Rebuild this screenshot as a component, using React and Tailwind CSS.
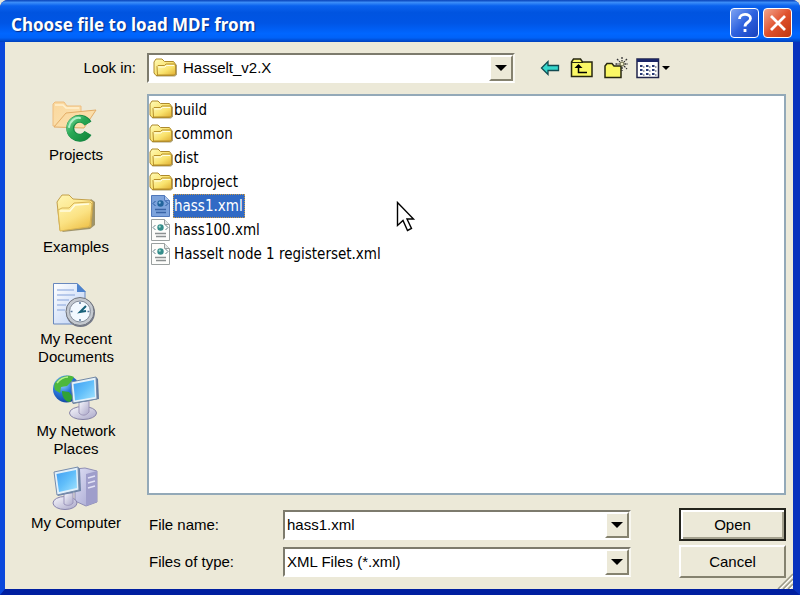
import { useState } from "react";

const UI_FONT = "font-['Liberation_Sans',Arial,sans-serif] text-[15px] leading-[18px] text-black";

const SUNKEN =
  "relative h-[30px] border-2 border-t-[#7d7b6d] border-l-[#7d7b6d] border-r-[#f8f7f0] border-b-white bg-white";

const RAISED =
  "border-2 border-t-white border-l-white border-r-[#85826f] border-b-[#85826f] bg-[#ece9d8]";

const FILES = [
  { name: "build", folder: true },
  { name: "common", folder: true },
  { name: "dist", folder: true },
  { name: "nbproject", folder: true },
  { name: "hass1.xml" },
  { name: "hass100.xml" },
  { name: "Hasselt node 1 registerset.xml" },
];

const PLACES = [
  { label: "Projects", Icon: ProjectsIcon },
  { label: "Examples", Icon: ExamplesIcon },
  { label: "My Recent Documents", Icon: RecentIcon },
  { label: "My Network Places", Icon: NetworkIcon },
  { label: "My Computer", Icon: ComputerIcon },
];

// shared gradients for every icon on the page
function IconDefs() {
  return (
    <svg className="absolute h-0 w-0" aria-hidden>
      <defs>
        <linearGradient id="folder" x1="0" y1="0" x2="1" y2="1">
          <stop offset="0" stopColor="#fffbb8" />
          <stop offset="0.55" stopColor="#f9e26c" />
          <stop offset="1" stopColor="#dfae32" />
        </linearGradient>
        <linearGradient id="bigFolder" x1="0" y1="0" x2="0.6" y2="1">
          <stop offset="0" stopColor="#fff6b4" />
          <stop offset="0.6" stopColor="#fbe283" />
          <stop offset="1" stopColor="#f0c550" />
        </linearGradient>
        <linearGradient id="peach" x1="0" y1="0" x2="1" y2="1">
          <stop offset="0" stopColor="#fbd79c" />
          <stop offset="1" stopColor="#fae3b4" />
        </linearGradient>
        <linearGradient id="greenC" x1="0" y1="0" x2="1" y2="1">
          <stop offset="0" stopColor="#6fd391" />
          <stop offset="0.4" stopColor="#2aa956" />
          <stop offset="1" stopColor="#138a3e" />
        </linearGradient>
        <linearGradient id="screen" x1="0" y1="0" x2="1" y2="1">
          <stop offset="0" stopColor="#3f9df2" />
          <stop offset="0.5" stopColor="#62bffa" />
          <stop offset="1" stopColor="#a4e4ff" />
        </linearGradient>
        <linearGradient id="metal" x1="0" y1="0" x2="1" y2="1">
          <stop offset="0" stopColor="#f8f8fd" />
          <stop offset="1" stopColor="#a9a6c8" />
        </linearGradient>
        <linearGradient id="tower" x1="0" y1="0" x2="1" y2="1">
          <stop offset="0" stopColor="#dfe0f5" />
          <stop offset="1" stopColor="#a3a3cf" />
        </linearGradient>
        <linearGradient id="paper" x1="0" y1="0" x2="1" y2="1">
          <stop offset="0" stopColor="#ffffff" />
          <stop offset="1" stopColor="#b9cff5" />
        </linearGradient>
        <radialGradient id="globe" cx="0.35" cy="0.3" r="0.8">
          <stop offset="0" stopColor="#9bdcff" />
          <stop offset="0.45" stopColor="#2a78dc" />
          <stop offset="1" stopColor="#0d3a96" />
        </radialGradient>
      </defs>
    </svg>
  );
}

function FolderIcon() {
  return (
    <svg className="h-6 w-6 shrink-0" viewBox="0 0 24 24" aria-hidden>
      <path d="M3 20.500h19l2-2V9l-2-1.500z" fill="#8d7a3c" opacity="0.7" />
      <path d="M1 17V6l2-3h6l2.500 2.500h9L22 7.500V18l-2 1.500H3z" fill="url(#folder)" stroke="#ae8a2c" />
      <path d="M4.500 19 4 10.500 5 9.500h6.500L13 8h8.500l1 1v9l-1 1z" fill="url(#folder)" stroke="#b8902c" />
      <path d="M5.500 11h6.500l1.500-1.500h7.500" fill="none" stroke="#fffde0" />
    </svg>
  );
}

function XmlIcon({ selected }) {
  return (
    <svg className="h-6 w-6 shrink-0" viewBox="0 0 24 24" aria-hidden>
      <path
        d="M2.500 1.500h13l5 5v16h-18z"
        fill={selected ? "#7da3dc" : "#fdfdfb"}
        stroke={selected ? "#5078bb" : "#9aa0a0"}
      />
      <path d="M15.500 1.500v5h5" fill={selected ? "#a9c3ec" : "#e4e8e8"} stroke={selected ? "#5078bb" : "#9aa0a0"} />
      <circle cx="11.500" cy="9.500" r="3.200" fill={selected ? "#22649c" : "#358d8b"} />
      <circle cx="10.700" cy="8.700" r="1.100" fill={selected ? "#8dc0e4" : "#a6dcd0"} />
      <path d="m6.500 7-2.500 2.500L6.500 12M16.500 7 19 9.500 16.500 12" fill="none" stroke={selected ? "#28599f" : "#65808a"} />
      <path d="M6 15.500h11M7 18.500h10" stroke={selected ? "#3963a5" : "#8c9191"} strokeWidth="1.400" />
    </svg>
  );
}

function ProjectsIcon() {
  return (
    <svg className="h-12 w-12" viewBox="0 0 48 48" aria-hidden>
      <path d="M1 28V6l2-2h9l3 4h14v8L8 28z" fill="url(#peach)" stroke="#eebd7e" />
      <path d="M2 29 14 15l30-3-12 18z" fill="url(#peach)" stroke="#e3ac66" />
      <path d="M3 7h8l3 3h13" fill="none" stroke="#fff1cf" strokeWidth="1.500" />
      <path d="M36 25.500A9.500 9.500 0 1 0 36 35" fill="none" stroke="#168844" strokeWidth="8" />
      <path d="M35.500 25.500A9.500 9.500 0 1 0 35.500 35" fill="none" stroke="url(#greenC)" strokeWidth="6.500" />
      <path d="M17 29c1-6 6-10 11-9" fill="none" stroke="#b4f0c8" strokeWidth="2" strokeLinecap="round" />
    </svg>
  );
}

function ExamplesIcon() {
  return (
    <svg className="h-12 w-12" viewBox="0 0 48 48" aria-hidden>
      <path d="m10 42 28-3 5-4V12l-4-3z" fill="#857744" opacity="0.75" />
      <path d="M8 40 5 12l2-3 3-4h7l4 4 17 1 3 2-2 25z" fill="url(#bigFolder)" stroke="#c3a04a" />
      <path d="M8 41 6 20l4-2h7l5-5 16-1 2 2-2 21-2 2z" fill="url(#bigFolder)" stroke="#d8b454" />
      <path d="M8 21h10l5-6 14-1" fill="none" stroke="#fffce0" strokeWidth="1.500" />
    </svg>
  );
}

function RecentIcon() {
  return (
    <svg className="h-12 w-12" viewBox="0 0 48 48" aria-hidden>
      <path d="M1.500 1.500H25l8 8V42H1.500z" fill="url(#paper)" stroke="#6888be" />
      <path d="M25 1v9h9z" fill="#4d83ce" />
      <path d="M5 8h17M5 13h18M5 18h12M5 23h9M5 28h8" stroke="#a5bce5" strokeWidth="1.500" />
      <circle cx="28.500" cy="30.500" r="14.500" fill="#737888" />
      <circle cx="28" cy="29.500" r="14" fill="#c4c9d0" stroke="#70747d" />
      <circle cx="28" cy="29.500" r="10.500" fill="#f2f9ff" stroke="#858d9a" />
      <path d="M28 20v2M28 37v2M18.500 29.500h2M35.500 29.500h2" stroke="#55759a" strokeWidth="1.500" />
      <path d="m34 24-6 6 6-1" fill="none" stroke="#17617a" strokeWidth="2" />
    </svg>
  );
}

function NetworkIcon() {
  return (
    <svg className="h-12 w-12" viewBox="0 0 48 48" aria-hidden>
      <circle cx="14.500" cy="15" r="13.500" fill="url(#globe)" />
      <path d="M3 9c5-7 14-9 19-6l-3 5-4 4-6 1-1 6-5-3c-1-3-1-5 0-7z" fill="#4db83c" />
      <path d="m10 17 7 1 4 5-3 5c-5 0-8-5-8-11z" fill="#31a135" />
      <path d="M5 9c3-4 7-6 11-6" fill="none" stroke="#b7f090" strokeWidth="1.500" />
      <ellipse cx="31" cy="39" rx="13.500" ry="6.500" fill="url(#metal)" stroke="#8582a5" />
      <path d="M27 27h10v11c-3 4-7 4-10 1z" fill="url(#metal)" stroke="#9d96b8" />
      <path d="m44 3 2 2 1 20-26 5-1-2z" fill="#62799c" />
      <path d="m19 8 25-5 1 22-24 4z" fill="#e4f1fa" stroke="#7389a6" />
      <path d="m21.500 10 20.500-4 1 17-20 3.500z" fill="url(#screen)" />
    </svg>
  );
}

function ComputerIcon() {
  return (
    <svg className="h-12 w-12" viewBox="0 0 48 48" aria-hidden>
      <path d="m23 3 10-1 12 3v31l-11 4-11-5z" fill="url(#tower)" stroke="#8f8eb5" />
      <path d="m34 8 11-3v31l-11 4z" fill="#9f9ecb" />
      <path d="m36 12 7-2m-7 7 7-2m-7 7 7-2" stroke="#e2e2f6" strokeWidth="1.500" />
      <ellipse cx="13" cy="37" rx="12" ry="6.500" fill="url(#metal)" stroke="#8884ad" />
      <path d="M12 27h9v10c-3 3-6 3-9 1z" fill="url(#metal)" stroke="#9c96bc" />
      <path d="m26 1 2 2 1 22-23 5-1-2z" fill="#6d83a6" />
      <path d="m2 6 24-5 1 23-22 5z" fill="#e2f0fa" stroke="#768cac" />
      <path d="m4.500 8 19.500-4 1 18-18 4z" fill="url(#screen)" />
    </svg>
  );
}

function DropArrow() {
  return (
    <svg width="12" height="6" viewBox="0 0 12 6" aria-hidden>
      <path d="M0 0h12L6 6z" fill="#000" />
    </svg>
  );
}

const DROP_BOX = `absolute top-0 right-0 flex h-[26px] w-6 items-center justify-center ${RAISED}`;

function TitleBar() {
  return (
    <header className="flex h-[42px] items-center justify-between rounded-t-lg bg-[linear-gradient(180deg,#0842b8_0%,#3a8cf8_6%,#0a62ee_14%,#0054e0_30%,#0055e5_55%,#0066ff_80%,#0062f8_90%,#0040bc_100%)] pr-2 pl-[11px]">
      <h1 className="pt-2 font-['Noto_Sans','Open_Sans',sans-serif] text-[17px] leading-6 font-bold text-white [text-shadow:1px_1px_1px_#0a2a80]">
        Choose file to load MDF from
      </h1>
      <div className="flex gap-1 pt-1">
        <button
          type="button"
          aria-label="Help"
          className="flex h-[30px] w-[29px] items-center justify-center rounded-[4px] border border-white bg-linear-to-br from-[#7fa2f1] via-[#2d61df] to-[#1842bd]"
        >
          <svg className="h-5 w-5" viewBox="0 0 20 20" fill="none" stroke="#fff" strokeWidth="2.800" aria-hidden>
            <path d="M4.500 6c0-6 11-6 11-.5 0 4-5.500 3.500-5.500 8M10 16v3" />
          </svg>
        </button>
        <button
          type="button"
          aria-label="Close"
          className="flex h-[30px] w-[29px] items-center justify-center rounded-[4px] border border-white bg-linear-to-br from-[#f0a48c] via-[#e0512c] to-[#bf3710]"
        >
          <svg className="h-5 w-5" viewBox="0 0 20 20" stroke="#fff" strokeWidth="2.800" aria-hidden>
            <path d="m3 3 14 14M17 3 3 17" />
          </svg>
        </button>
      </div>
    </header>
  );
}

function Toolbar() {
  return (
    <div className="ml-[25px] flex items-center gap-2.5">
      <button type="button" aria-label="Back">
        <svg className="h-6 w-5" viewBox="0 0 20 24" aria-hidden>
          <path d="M1.500 12 8 5.500v4h10.500v5H8v4z" fill="#35d6cb" stroke="#124a50" strokeWidth="1.300" />
        </svg>
      </button>
      <button type="button" aria-label="Up one level">
        <svg className="h-6 w-6" viewBox="0 0 24 24" aria-hidden>
          <path d="M1.500 20.500V6l2-3h7l2 3h9.500v14.500z" fill="#fbf865" stroke="#262610" strokeWidth="1.500" />
          <path d="M2 6.500h11" stroke="#262610" />
          <path d="M8.500 9v7.500H17" fill="none" stroke="#000" strokeWidth="1.500" />
          <path d="m4.500 12 4-4 4 4z" fill="#000" />
        </svg>
      </button>
      <button type="button" aria-label="Create new folder">
        <svg className="h-6 w-6" viewBox="0 0 24 24" aria-hidden>
          <path d="M1 21.500V10l2-2.500h5l2 2.500h7v11.500z" fill="#fbf865" stroke="#262610" strokeWidth="1.500" />
          <path d="M18 1v4M18 11v4M11.500 8h4M20.500 8h4M13 3l3 3M20 10l3 3M23 3l-3 3" stroke="#333" strokeDasharray="2 1" strokeWidth="1.300" />
          <circle cx="18" cy="8" r="2" fill="#f4f1cd" stroke="#595938" />
        </svg>
      </button>
      <button type="button" aria-label="View menu" className="-ml-0.5 flex items-center gap-0.5">
        <svg className="h-6 w-6" viewBox="0 0 24 24" aria-hidden>
          <path d="M1 3h21.500v18.500H1z" fill="#fff" stroke="#20254b" strokeWidth="1.500" />
          <path d="M1 3h21.500v3H1z" fill="#1b2667" />
          <path d="M4 10h2.500M10 10h2.500M16 10h2.500M4 14h2.500M10 14h2.500M16 14h2.500M4 18h2.500M10 18h2.500M16 18h2.500" stroke="#263773" strokeWidth="2.200" />
          <path d="M7 11h1.500M13 11h1.500M19 11h1.500M7 15h1.500M13 15h1.500M19 15h1.500M7 19h1.500M13 19h1.500M19 19h1.500" stroke="#3b4050" />
        </svg>
        <svg className="h-1 w-2" viewBox="0 0 8 4" aria-hidden>
          <path d="M0 0h8L4 4z" fill="#000" />
        </svg>
      </button>
    </div>
  );
}

export default function App() {
  const [selected, setSelected] = useState("hass1.xml");

  return (
    <div className="bg-[#e5e6dc]">
      <IconDefs />
      <div className={`relative flex min-h-screen flex-col rounded-t-lg bg-[#0a2fb8] ${UI_FONT}`}>
        <TitleBar />
        <main className="flex flex-1 flex-col border-t-0 border-r-[7px] border-b-[6px] border-l-[5px] border-r-[#0731bd] border-b-[#001fa0] border-l-[#0a48dc] bg-[#ece9d8]">
          <div className="flex items-center pt-[11px] pb-[11px]">
            <label htmlFor="look-in" className="w-[142px] shrink-0 pr-[11px] text-right">
              Look in:
            </label>
            <div className={`w-[368px] ${SUNKEN}`}>
              <div className="pointer-events-none absolute top-px left-1">
                <FolderIcon />
              </div>
              <select id="look-in" className="h-full w-full appearance-none pl-[34px] outline-none">
                <option>Hasselt_v2.X</option>
              </select>
              <span className={`pointer-events-none ${DROP_BOX}`}>
                <DropArrow />
              </span>
            </div>
            <Toolbar />
          </div>

          <div className="flex flex-1">
            <nav className="flex w-[142px] shrink-0 flex-col items-center pt-1">
              {PLACES.map(({ label, Icon }) => (
                <button key={label} type="button" className="flex h-[92px] w-[100px] flex-col items-center">
                  <Icon />
                  <span>{label}</span>
                </button>
              ))}
            </nav>

            <div className="flex flex-1 flex-col pr-[7px] pb-[11px]">
              <div className="relative flex-1 border-2 border-[#93a9b8] bg-white pt-0.5">
                <ul className="font-['DejaVu_Sans_Condensed','DejaVu_Sans',sans-serif]">
                  {FILES.map((file) => {
                    const active = file.name === selected;
                    return (
                      <li key={file.name} className="h-6">
                        <button type="button" className="flex items-center" onClick={() => setSelected(file.name)}>
                          {file.folder ? <FolderIcon /> : <XmlIcon selected={active} />}
                          <span
                            className={
                              active
                                ? "border border-dotted border-[#c99a4a] bg-[#316ac5] py-0.5 pr-px text-white"
                                : "border border-transparent py-0.5 pr-px"
                            }
                          >
                            {file.name}
                          </span>
                        </button>
                      </li>
                    );
                  })}
                </ul>
                {/* mouse pointer */}
                <svg className="pointer-events-none absolute top-[105px] left-[247px] h-8 w-5" viewBox="0 0 20 32" aria-hidden>
                  <path d="M1.500 1.500v23l5.500-5 4.500 10 4-2-4.500-9.500h6.500z" fill="#fff" stroke="#000" strokeWidth="1.400" />
                </svg>
              </div>

              <form className="mt-[13px] flex flex-col gap-1" onSubmit={(e) => e.preventDefault()}>
                <div className="flex items-center">
                  <label htmlFor="file-name" className="w-[136px] pl-0.5">
                    File name:
                  </label>
                  <div className={`flex-1 ${SUNKEN}`}>
                    <input
                      id="file-name"
                      className="h-full w-full pl-0.5 outline-none"
                      value={selected}
                      onChange={(e) => setSelected(e.target.value)}
                    />
                    <button type="button" aria-label="Recent file names" className={DROP_BOX}>
                      <DropArrow />
                    </button>
                  </div>
                  <button type="submit" className="ml-12 h-[33px] w-[107px] border-2 border-[#25251d] bg-[#ece9d8] shadow-[inset_2px_2px_0_#fff,inset_-2px_-2px_0_#a5a28f]">
                    Open
                  </button>
                </div>
                <div className="flex items-center">
                  <label htmlFor="file-type" className="w-[136px] pl-0.5">
                    Files of type:
                  </label>
                  <div className={`flex-1 ${SUNKEN}`}>
                    <select id="file-type" className="h-full w-full appearance-none pl-0.5 outline-none">
                      <option>XML Files (*.xml)</option>
                    </select>
                    <span className={`pointer-events-none ${DROP_BOX}`}>
                      <DropArrow />
                    </span>
                  </div>
                  <button type="button" className={`ml-12 h-[33px] w-[107px] ${RAISED}`}>
                    Cancel
                  </button>
                </div>
              </form>
            </div>
          </div>
        </main>
        {/* resize grip */}
        <svg className="pointer-events-none absolute right-[7px] bottom-1.5 h-4 w-4" viewBox="0 0 16 16" aria-hidden>
          <path d="M1 16 16 1M6 16 16 6M11 16l5-5" stroke="#9b9988" strokeWidth="1.500" />
          <path d="M3 16 16 3M8 16l8-8M13 16l3-3" stroke="#fff" />
        </svg>
      </div>
    </div>
  );
}
